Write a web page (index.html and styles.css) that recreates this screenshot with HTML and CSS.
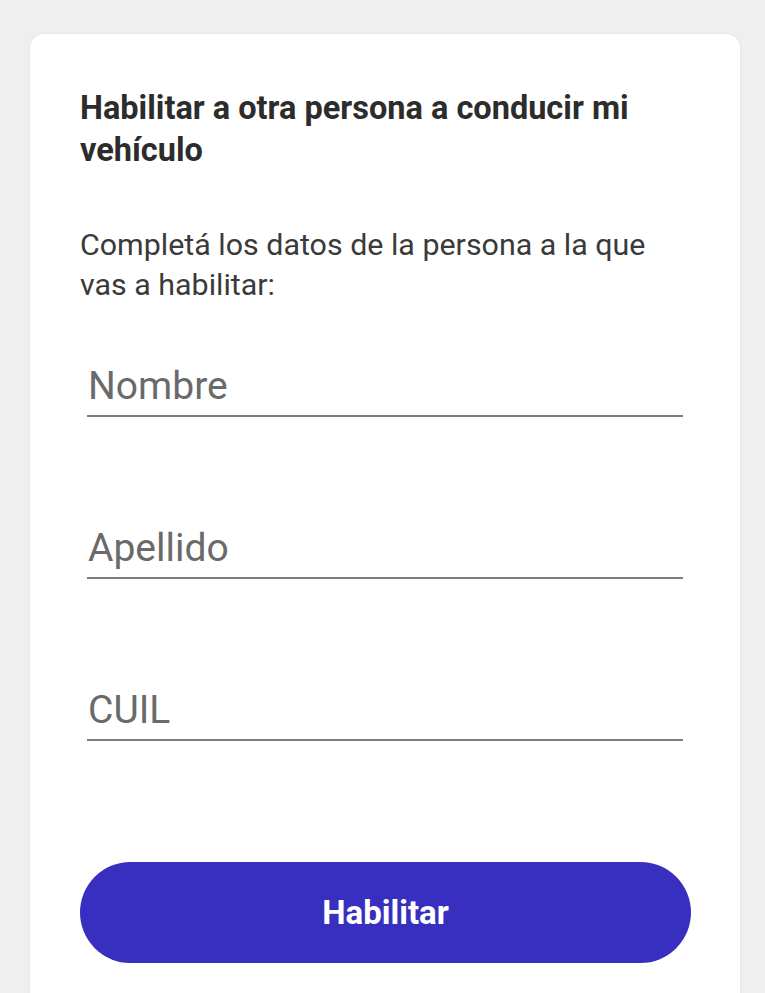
FILE: index.html
```html
<!DOCTYPE html>
<html lang="es">
<head>
<meta charset="utf-8">
<link rel="stylesheet" href="styles.css">
</head>
<body>
<main class="card">
  <h1 class="title">Habilitar a otra persona a conducir mi vehículo</h1>
  <p class="intro">Completá los datos de la persona a la que vas a habilitar:</p>
  <form class="form">
    <label class="field"><input class="input" type="text" placeholder="Nombre"></label>
    <label class="field"><input class="input" type="text" placeholder="Apellido"></label>
    <label class="field"><input class="input" type="text" placeholder="CUIL"></label>
    <button class="btn" type="button">Habilitar</button>
  </form>
</main>
</body>
</html>
```

FILE: styles.css
```css
html, body {
  margin: 0;
  padding: 0;
  background: #efefef;
  height: 100%;
  overflow: hidden;
}
.card {
  box-sizing: border-box;
  margin: 34px 25px 0 30px;
  width: 710px;
  height: 1100px;
  background: #ffffff;
  border-radius: 14px;
  box-shadow: 0 0 3px rgba(0,0,0,0.08);
  padding: 53px 49px 0 50px;
}
.title {
  margin: 0;
  font-family: Roboto, sans-serif;
  font-weight: 700;
  font-size: 32.5px;
  line-height: 42px;
  color: #2c2c2c;
}
.intro {
  margin: 54px 0 0 0;
  font-family: Roboto, sans-serif;
  font-weight: 400;
  font-size: 30.4px;
  line-height: 40px;
  color: #3a3a3a;
}
.form {
  display: flex;
  flex-direction: column;
  margin-top: 56px;
}
.field {
  display: flex;
  margin: 0 8px 0 7px;
  height: 56px;
  align-items: flex-end;
}
.field + .field {
  margin-top: 106px;
}
.input {
  box-sizing: border-box;
  width: 100%;
  height: 56px;
  border: none;
  border-bottom: 2px solid #7d7d7d;
  outline: none;
  padding: 0 0 4px 1px;
  font-family: Roboto, sans-serif;
  font-size: 39px;
  color: #333;
  background: transparent;
}
.input::placeholder {
  color: #6a6a6a;
}
.btn {
  margin-top: 121px;
  height: 101px;
  border: none;
  border-radius: 51px;
  background: #382fc0;
  color: #ffffff;
  font-family: Roboto, sans-serif;
  font-weight: 700;
  font-size: 33px;
  cursor: pointer;
}
```
